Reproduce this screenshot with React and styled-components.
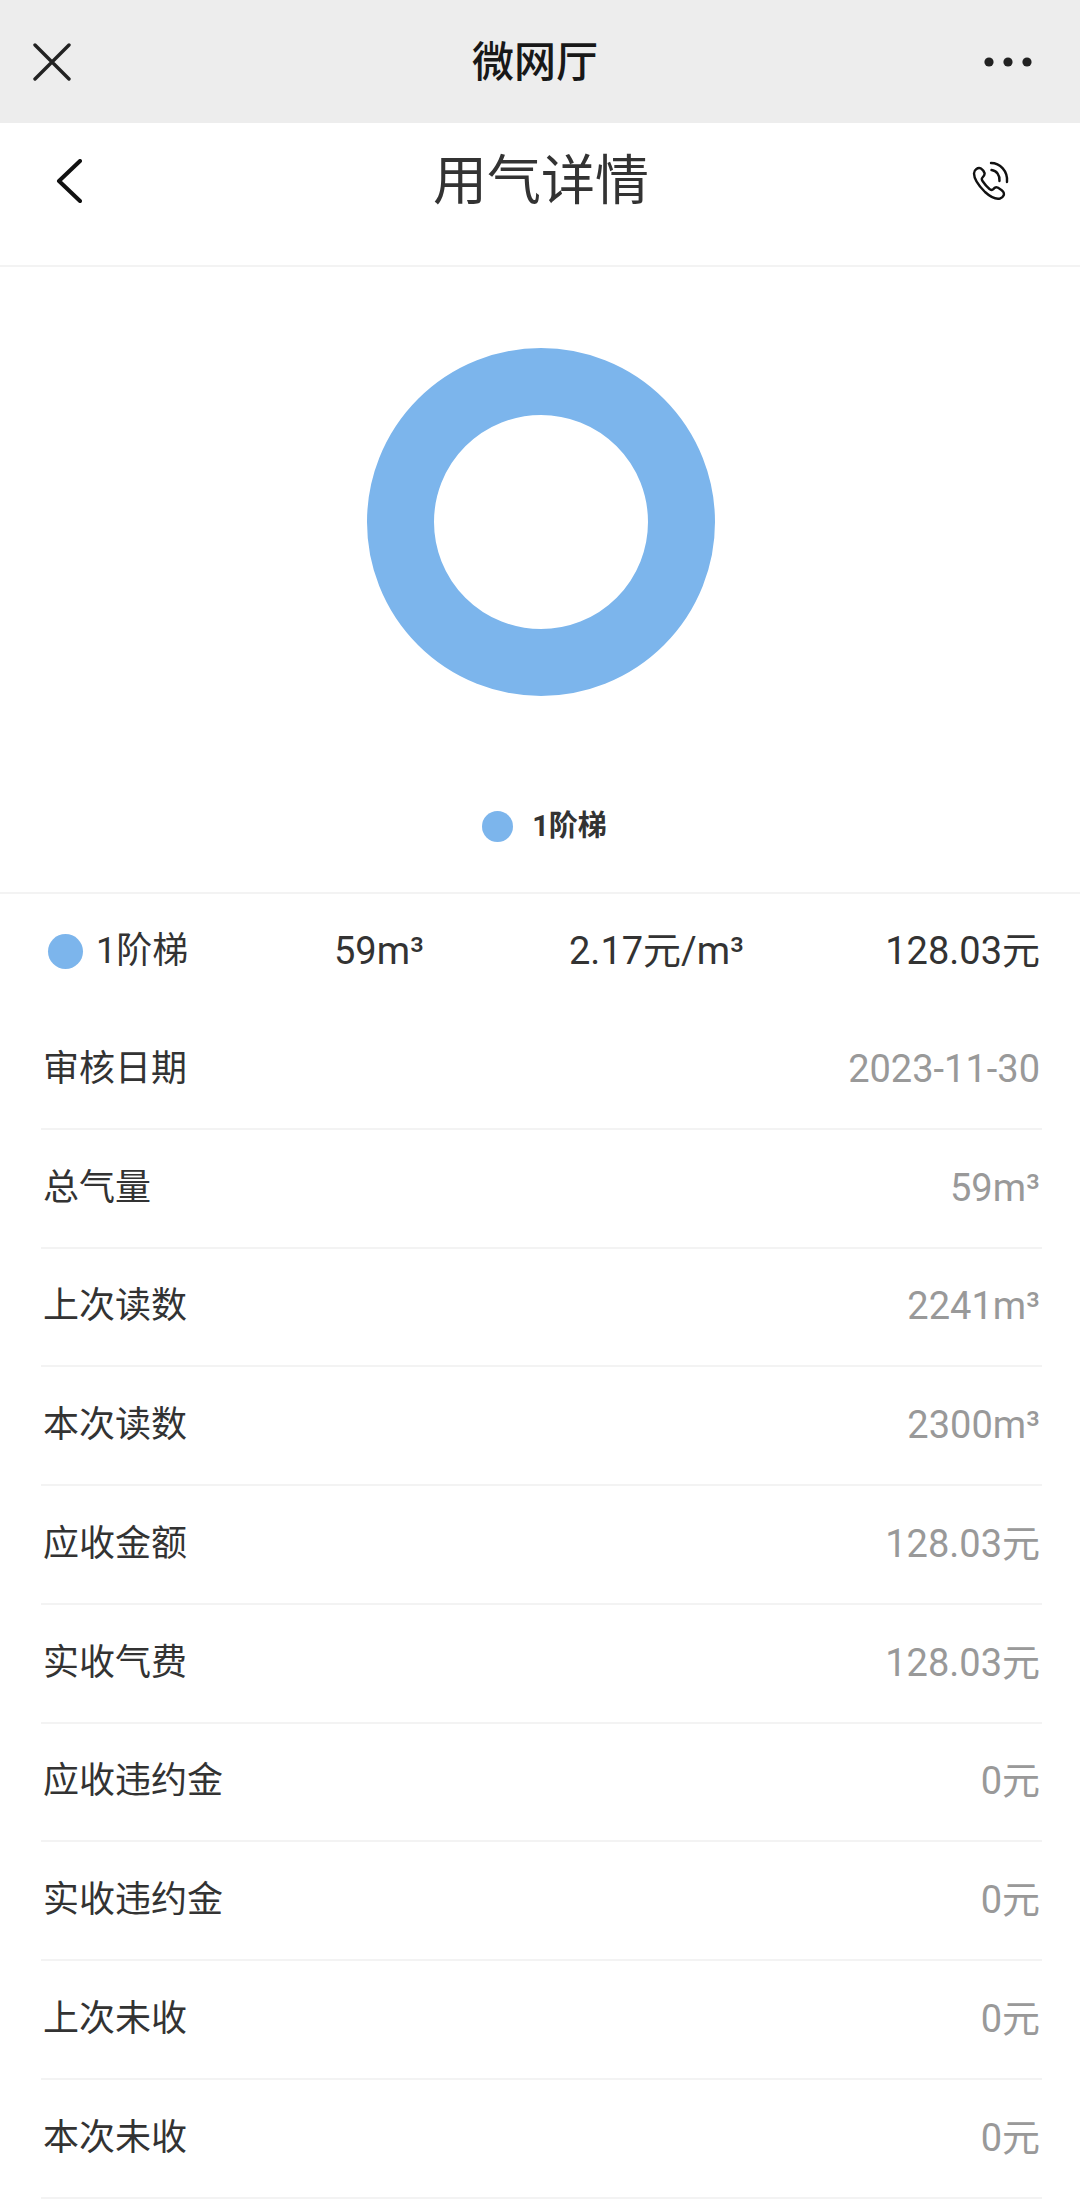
import React from "react";
import styled, { createGlobalStyle } from "styled-components";

const FONT = `Roboto, "Noto Sans CJK SC", sans-serif`;

const GlobalStyle = createGlobalStyle`
  * {
    box-sizing: border-box;
  }
  html, body {
    margin: 0;
    padding: 0;
    background: #fff;
    font-family: ${FONT};
  }
`;

const Page = styled.div`
  width: 1080px;
  height: 2201px;
  overflow: hidden;
  background: #fff;
`;

const WxBar = styled.div`
  height: 123px;
  background: #ededed;
  display: flex;
  align-items: center;
  justify-content: space-between;
  padding: 0 48px 0 33px;
`;

const WxTitle = styled.div`
  font-size: 42px;
  font-weight: 500;
  color: #181818;
  line-height: 1;
  margin: 3px 0 0 15px;
`;

const NavBar = styled.div`
  height: 144px;
  border-bottom: 2px solid #f3f3f3;
  display: flex;
  align-items: flex-start;
  justify-content: space-between;
  padding: 30px 66px 0 47px;
`;

const NavTitle = styled.div`
  font-size: 54px;
  line-height: 56px;
  color: #333;
  margin: 1px 0 0 21px;
`;

const NavIcon = styled.div`
  width: 44px;
  height: 56px;
  display: flex;
  align-items: center;
  justify-content: center;
`;

const ChartArea = styled.div`
  height: 627px;
  border-bottom: 2px solid #f3f3f3;
  display: flex;
  flex-direction: column;
  align-items: center;
  padding: 81px 0 0 1px;
`;

const Donut = styled.div`
  width: 348px;
  height: 348px;
  border: 67px solid #7cb5ec;
  border-radius: 50%;
`;

const Legend = styled.div`
  margin: 114px 0 0 8px;
  display: flex;
  align-items: center;
  gap: 19px;
  font-size: 29px;
  font-weight: 700;
  color: #333;
  line-height: 32px;
`;

const Dot = styled.span`
  display: block;
  width: ${(p) => p.$size}px;
  height: ${(p) => p.$size}px;
  border-radius: 50%;
  background: #7cb5ec;
  flex: none;
`;

const Summary = styled.div`
  height: 117px;
  margin: 0 40px 0 48px;
  padding-bottom: 3px;
  display: grid;
  grid-template-columns: 286px 235px 1fr auto;
  align-items: center;
  font-size: 38px;
  line-height: 44px;
  color: #333;
`;

const SummaryName = styled.div`
  display: flex;
  align-items: center;
  gap: 13px;
  font-size: 36px;
`;

const SummaryCell = styled.div`
  text-align: ${(p) => p.$align || "left"};
`;

const List = styled.div`
  margin: 0 38px 0 41px;
`;

const Row = styled.div`
  height: 118.75px;
  border-bottom: 2px solid #f3f3f3;
  display: flex;
  align-items: center;
  justify-content: space-between;
  padding: 0 2px 1px 2px;
  line-height: 44px;
`;

const Label = styled.span`
  font-size: 36px;
  color: #333;
`;

const Value = styled.span`
  font-size: 38px;
  color: #999;
`;

const rows = [
  ["审核日期", "2023-11-30"],
  ["总气量", "59m³"],
  ["上次读数", "2241m³"],
  ["本次读数", "2300m³"],
  ["应收金额", "128.03元"],
  ["实收气费", "128.03元"],
  ["应收违约金", "0元"],
  ["实收违约金", "0元"],
  ["上次未收", "0元"],
  ["本次未收", "0元"],
];

function CloseIcon() {
  return (
    <svg width="38" height="38" viewBox="0 0 38 38" fill="none" stroke="#222" strokeWidth="3.4" strokeLinecap="round">
      <path d="M2 2 L36 36 M36 2 L2 36" />
    </svg>
  );
}

function MoreIcon() {
  return (
    <svg width="48" height="12" viewBox="0 0 48 12" fill="#222">
      <circle cx="5" cy="6" r="4.6" />
      <circle cx="24" cy="6" r="4.6" />
      <circle cx="43" cy="6" r="4.6" />
    </svg>
  );
}

function BackIcon() {
  return (
    <svg width="26" height="44" viewBox="0 0 26 44" fill="none" stroke="#111" strokeWidth="4" strokeLinecap="round" strokeLinejoin="round">
      <path d="M24 2 L3 22 L24 42" />
    </svg>
  );
}

function PhoneIcon() {
  return (
    <svg width="40" height="40" viewBox="0 0 40 40" fill="none" stroke="#111" strokeWidth="2.4" strokeLinecap="round" strokeLinejoin="round">
      <path d="M9 7.5 C6 6 2 8.5 2 12.5 C2 19 8 26 13 31 C18 35.5 24 38.5 28 37.5 C31.5 36.5 33 33 31 30.5 C30 29 27 27.5 25.5 26.5 C23.5 25.5 22 27 21 28.5 C20 29.5 19 29 17.5 28 C14.5 25.5 12.5 23 10.5 20 C9.5 18.5 9.5 17.5 10.5 16.5 C12 15 13 13.5 12.5 12 C12 10.5 10.5 8.5 9 7.5 Z" />
      <path d="M19.5 9 C24.5 9.5 28 14 27.5 20" />
      <path d="M19 2 C28 2 36 10 35 21" />
    </svg>
  );
}

export default function App() {
  return (
    <Page>
      <GlobalStyle />
      <WxBar>
        <CloseIcon />
        <WxTitle>微网厅</WxTitle>
        <MoreIcon />
      </WxBar>
      <NavBar>
        <NavIcon>
          <BackIcon />
        </NavIcon>
        <NavTitle>用气详情</NavTitle>
        <NavIcon>
          <PhoneIcon />
        </NavIcon>
      </NavBar>
      <ChartArea>
        <Donut />
        <Legend>
          <Dot $size={31} />
          1阶梯
        </Legend>
      </ChartArea>
      <Summary>
        <SummaryName>
          <Dot $size={35} />
          1阶梯
        </SummaryName>
        <SummaryCell>59m³</SummaryCell>
        <SummaryCell>2.17元/m³</SummaryCell>
        <SummaryCell $align="right">128.03元</SummaryCell>
      </Summary>
      <List>
        {rows.map(([label, value]) => (
          <Row key={label}>
            <Label>{label}</Label>
            <Value>{value}</Value>
          </Row>
        ))}
      </List>
    </Page>
  );
}
